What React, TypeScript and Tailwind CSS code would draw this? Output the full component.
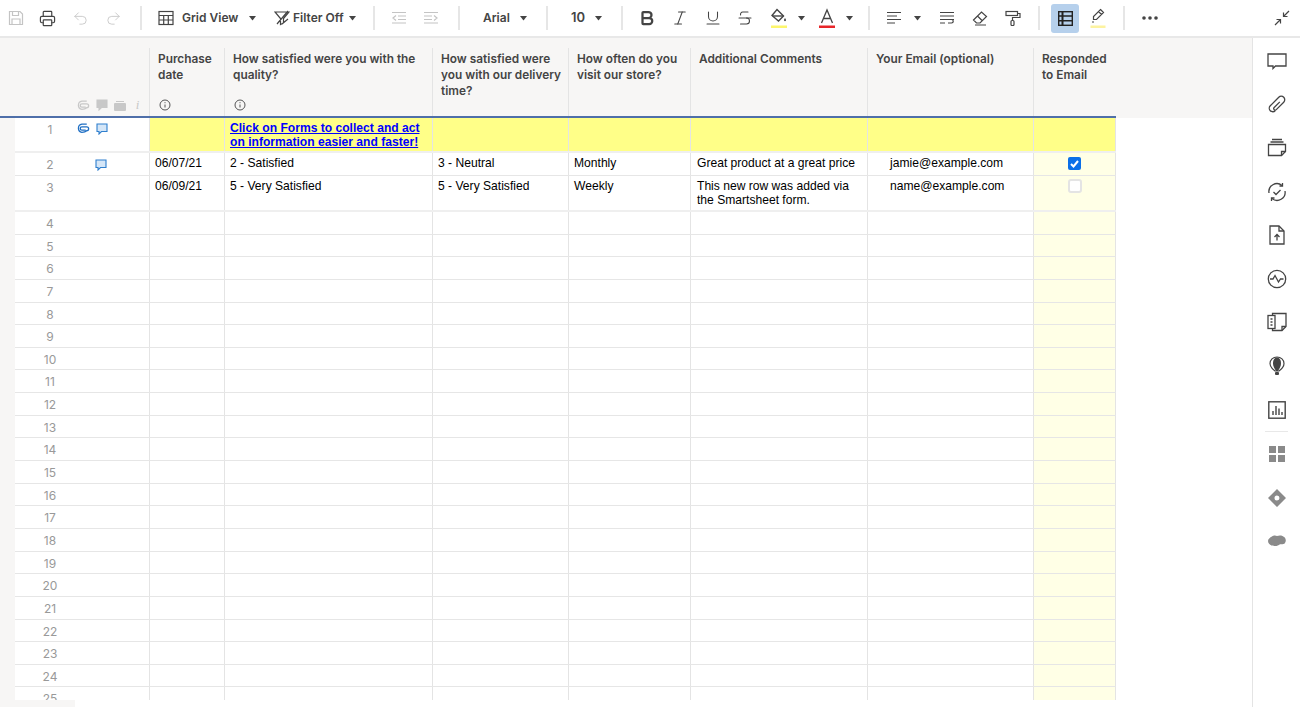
import React from 'react';
import { Printer, Undo2, Redo2, Bold, Italic, Underline, Strikethrough } from 'lucide-react';

const S = ({ children, size = 16, className = '' }: { children: React.ReactNode; size?: number; className?: string }) => (
  <svg width={size} height={size} viewBox="0 0 16 16" fill="none" stroke="currentColor" strokeWidth="1.2" className={`shrink-0 ${className}`}>
    {children}
  </svg>
);

const Caret = ({ className = '' }: { className?: string }) => (
  <span className={`w-[12px] shrink-0 flex justify-center ${className}`}>
    <svg width="7" height="5" viewBox="0 0 7 5" fill="#444"><path d="M0 0h7L3.500 4.500z" /></svg>
  </span>
);

const Sep = ({ className = '' }: { className?: string }) => <div className={`w-[2px] h-[24px] bg-[#e6e6e6] shrink-0 ${className}`} />;

const GridIcon = ({ className = '' }: { className?: string }) => (
  <S className={className} size={16}>
    <rect x="1" y="1.500" width="14" height="13" />
    <path d="M1 5.500h14M1 10h14M5.700 5.500v9M10.300 5.500v9" />
  </S>
);

const Toolbar = () => (
  <div className="h-[38px] shrink-0 flex items-center border-b-2 border-[#e8e8e8] text-[#444] text-[12px] font-semibold bg-white">
    <span className="w-[31px] flex justify-center text-[#c4c4c4]">
      <S><path d="M1.500 1.500h10.500l2.500 2.500v10.500h-13z" /><path d="M4.500 1.500v4h6v-4M4 14.500v-5.500h8v5.500" /></S>
    </span>
    <span className="w-[33px] flex justify-center"><Printer size={17} strokeWidth={1.7} /></span>
    <span className="w-[33px] flex justify-center text-[#c4c4c4]"><Undo2 size={17} strokeWidth={1.2} /></span>
    <span className="w-[32px] flex justify-center text-[#c4c4c4]"><Redo2 size={17} strokeWidth={1.2} /></span>
    <Sep className="ml-[11px]" />
    <GridIcon className="ml-[16px]" />
    <span className="ml-[8px] w-[64px]">Grid View</span>
    <Caret />
    <S className="ml-[16px]"><path d="M1 2h14L9.500 8.500V13l-3 1.500V8.500zM3 14L14 1M8 14l6-5" /></S>
    <span className="ml-[3px] w-[53px]">Filter Off</span>
    <Caret />
    <Sep className="ml-[15px]" />
    <S className="ml-[16px] text-[#c4c4c4]"><path d="M1 2.500h14M7 6h8M7 9.500h8M1 13h14M5 5.500L2 8l3 2.500" /></S>
    <S className="ml-[16px] text-[#c4c4c4]"><path d="M1 2.500h14M1 6h8M1 9.500h8M1 13h14M11 5.500L14 8l-3 2.500" /></S>
    <Sep className="ml-[19px]" />
    <span className="ml-[23px] w-[34px]">Arial</span>
    <Caret />
    <Sep className="ml-[17px]" />
    <span className="ml-[23px] w-[21px] text-[13px]">10</span>
    <Caret />
    <Sep className="ml-[17px]" />
    <span className="ml-[16px] w-[16px] flex justify-center"><Bold size={18} strokeWidth={3} className="shrink-0" /></span>
    <span className="ml-[17px] w-[16px] flex justify-center"><Italic size={18} strokeWidth={1.4} className="shrink-0" /></span>
    <span className="ml-[17px] w-[16px] flex justify-center"><Underline size={18} strokeWidth={1.4} className="shrink-0" /></span>
    <span className="ml-[16px] w-[16px] flex justify-center"><Strikethrough size={18} strokeWidth={1.4} className="shrink-0" /></span>
    <svg className="ml-[18px] shrink-0" width="16" height="21" viewBox="0 0 16 21" fill="none" stroke="#444" strokeWidth="1.4">
      <path d="M6 1.500l6.500 6.500-5 5L1 7.500z" /><path d="M1.500 8h11" /><path d="M14 10c1 1.500 1.200 2.200.8 2.800-.4.500-1.200.500-1.600 0-.4-.6-.2-1.300.8-2.800z" fill="#444" stroke="none" />
      <rect x="0" y="17.500" width="16" height="2.500" fill="#fdf66d" stroke="none" />
    </svg>
    <Caret className="ml-[8px]" />
    <svg className="ml-[12px] shrink-0" width="16" height="21" viewBox="0 0 16 21" fill="none" stroke="#444" strokeWidth="1.300">
      <path d="M2.500 15L8 2l5.500 13M4.500 10.500h7" />
      <rect x="0" y="17.500" width="16" height="2.500" fill="#e8262a" stroke="none" />
    </svg>
    <Caret className="ml-[8px]" />
    <Sep className="ml-[13px]" />
    <S className="ml-[16px]"><path d="M1 2.500h14M1 6h10M1 9.500h14M1 13h8" /></S>
    <Caret className="ml-[9px]" />
    <S className="ml-[16px]"><path d="M1 2.500h14M1 6h14M1 9.500h14M1 13h5M9 13h3.500a1.500 1.500 0 000-3.500H9" /></S>
    <S className="ml-[17px]"><path d="M1.500 10L9.500 2l5 4.500L8 13H4.500zM5.500 6L10.500 11M3 15h11" /></S>
    <S className="ml-[17px]"><rect x="1" y="1.500" width="11.500" height="4" /><path d="M12.500 3.500h2.500v4H7.500v3" /><rect x="6" y="10.500" width="3" height="5" rx="1" /></S>
    <Sep className="ml-[17px]" />
    <span className="ml-[11px] w-[28px] h-[29px] rounded-[3px] bg-[#b6d0ec] flex items-center justify-center shrink-0">
      <svg width="15" height="15" viewBox="0 0 15 15" fill="none" stroke="#222" strokeWidth="1.400">
        <rect x="0.700" y="0.700" width="13.600" height="13.600" />
        <path d="M4.500 0.700v13.600" strokeWidth="2" />
        <path d="M0.700 5h13.600M0.700 9.700h13.600" />
      </svg>
    </span>
    <svg className="ml-[11px] shrink-0" width="16" height="21" viewBox="0 0 16 21" fill="none" stroke="#444" strokeWidth="1.200">
      <path d="M10.500 1.500l3 3-7 7H3.500v-3zM8.500 3.500l3 3M2 14h2" />
      <rect x="0.500" y="17.500" width="15" height="2.500" fill="#fdf3a0" stroke="none" />
    </svg>
    <Sep className="ml-[17px]" />
    <svg className="ml-[17px] shrink-0" width="16" height="4" viewBox="0 0 16 4" fill="#444"><circle cx="2" cy="2" r="1.800" /><circle cx="8" cy="2" r="1.800" /><circle cx="14" cy="2" r="1.800" /></svg>
    <S className="ml-auto mr-[10px]" size={16}><path d="M15 1L9.500 6.500M9.500 2.500v4h4M1 15l5.500-5.500M2.500 9.500h4v4" /></S>
  </div>
);

const cols = [
  { w: 'w-[75px]', title: ['Purchase', 'date'], info: true },
  { w: 'w-[208px]', title: ['How satisfied were you with the', 'quality?'], info: true },
  { w: 'w-[136px]', title: ['How satisfied were', 'you with our delivery', 'time?'] },
  { w: 'w-[122px]', title: ['How often do you', 'visit our store?'] },
  { w: 'w-[177px]', title: ['Additional Comments'] },
  { w: 'w-[166px]', title: ['Your Email (optional)'] },
  { w: 'w-[82px]', title: ['Responded', 'to Email'] },
];

const Info = () => (
  <svg width="12" height="12" viewBox="0 0 12 12" fill="none" stroke="#555" strokeWidth="1">
    <circle cx="6" cy="6" r="5" /><path d="M6 5.500v3M6 3.200v1" />
  </svg>
);

const Clip = ({ color }: { color: string }) => (
  <svg width="13" height="11" viewBox="0 0 12 10" fill="none" stroke={color} strokeWidth="1.200">
    <path d="M8 6.500H4.500a1.500 1.500 0 010-3H9a1.500 1.500 0 010 3.500c-1 1-3 1.500-4.500 1.500A3.800 3.800 0 014.500 1H9" />
  </svg>
);

const Bubble = ({ fill, stroke }: { fill: string; stroke: string }) => (
  <svg width="12" height="12" viewBox="0 0 12 12" fill={fill} stroke={stroke} strokeWidth="1.100">
    <path d="M1 1h10v7.500H5.500L3 11V8.500H1z" />
  </svg>
);

const Header = () => (
  <div className="h-[80px] shrink-0 flex bg-[#f7f6f5]">
    <div className="w-[1116px] flex pt-[10px] border-b-2 border-[#4f6fa9]">
      <div className="w-[135px] ml-[15px] flex items-end justify-end pb-[5px] pr-[6px] gap-[6px] text-[#c8c8c8] border-r border-[#e4e4e4]">
        <Clip color="#c8c8c8" />
        <Bubble fill="#c8c8c8" stroke="#c8c8c8" />
        <svg width="12" height="10" viewBox="0 0 12 10" fill="#c8c8c8"><rect x="0" y="2" width="12" height="8" rx="1" /><rect x="2" y="0" width="8" height="1" /></svg>
        <span className="w-[11px] text-center font-['Liberation_Serif',serif] italic text-[13px] leading-[12px]">i</span>
      </div>
      {cols.map((c, i) => (
        <div key={i} className={`${c.w} shrink-0 flex flex-col justify-between pl-[8px] pt-[3px] pb-[5px] text-[11.85px] leading-[16px] font-semibold text-[#444] ${i < 6 ? 'border-r border-[#e4e4e4]' : ''}`}>
          <div>{c.title.map((t) => <div key={t} className="whitespace-nowrap">{t}</div>)}</div>
          {c.info && <div className="pl-[1px] h-[12px]"><Info /></div>}
        </div>
      ))}
    </div>
  </div>
);

const cellCls = ['w-[75px] pl-[5px]', 'w-[208px] pl-[5px]', 'w-[136px] pl-[5px]', 'w-[122px] pl-[5px]', 'w-[177px] pl-[6px]', 'w-[166px] pl-[22px]', 'w-[82px]'];

const Row = ({ n, h, cells, yellow, icons, check, thick }: { n: number; h: string; cells?: React.ReactNode[]; yellow?: boolean; icons?: React.ReactNode; check?: boolean | 'off'; thick?: boolean }) => (
  <div className={`${h} shrink-0 flex ${thick ? 'border-b-2 border-[#efefef]' : 'border-b border-[#e6e6e6]'}`}>
    <div className="w-[135px] shrink-0 flex border-r border-[#e4e4e4] bg-white pt-[4px]">
      <span className="w-[70px] text-center text-[12px] leading-[16px] text-[#999]">{n}</span>
      {icons}
    </div>
    {cellCls.map((c, i) => (
      <div
        key={i}
        className={`${c} shrink-0 border-r border-[#e4e4e4] text-[12.1px] leading-[14px] text-black font-['Liberation_Sans',Arial,sans-serif] pt-[3px] ${yellow ? 'bg-[#ffff88]' : i === 6 ? 'bg-[#ffffe6]' : ''}`}
      >
        {cells?.[i]}
        {i === 6 && check === true && (
          <div className="flex justify-center pt-[1px]">
            <span className="w-[13px] h-[13px] rounded-[2px] bg-[#0b6fe8] flex items-center justify-center">
              <svg width="9" height="8" viewBox="0 0 9 8" fill="none" stroke="#fff" strokeWidth="2"><path d="M1 4l2.500 2.500L8 1" /></svg>
            </span>
          </div>
        )}
        {i === 6 && check === 'off' && (
          <div className="flex justify-center">
            <span className="w-[14px] h-[14px] rounded-[3px] bg-white border-2 border-[#e4e4e4]" />
          </div>
        )}
      </div>
    ))}
  </div>
);

const SideSlot = ({ children, muted }: { children: React.ReactNode; muted?: boolean }) => (
  <div className={`h-[43.6px] shrink-0 flex items-center justify-center ${muted ? 'text-[#8a8a8a]' : 'text-[#444]'}`}>{children}</div>
);

const Sidebar = () => (
  <div className="w-[48px] shrink-0 border-l border-[#e4e4e4] bg-white pt-[1px] flex flex-col items-stretch">
    <SideSlot><svg width="20" height="18" viewBox="0 0 20 18" fill="none" stroke="currentColor" strokeWidth="1.300"><path d="M1 2h18v12H8.500L6 16.500V14H1z" /></svg></SideSlot>
    <SideSlot>
      <svg width="20" height="20" viewBox="0 0 20 20" fill="none" stroke="currentColor" strokeWidth="1.300">
        <g transform="rotate(45 10 10)">
          <path d="M9 6v8a1.500 1.500 0 003 0V3.500a3.500 3.500 0 00-7 0v12a3.500 3.500 0 007 0" transform="translate(1.500 0.500)" />
        </g>
      </svg>
    </SideSlot>
    <SideSlot>
      <svg width="20" height="20" viewBox="0 0 20 20" fill="none" stroke="currentColor" strokeWidth="1.300">
        <path d="M5 1.500h10M3.500 4h13" /><path d="M1.500 6.500h17v7l-4 4H1.500z" /><path d="M18.500 13.500h-4v4" />
      </svg>
    </SideSlot>
    <SideSlot>
      <svg width="20" height="20" viewBox="0 0 20 20" fill="none" stroke="currentColor" strokeWidth="1.300">
        <path d="M2 11A8 8 0 0115 3.500M18 9A8 8 0 015 16.500" /><path d="M15.500 1v3h-3M4.500 19v-3h3" /><path d="M6.500 10l2.500 2.500 4.500-4.500" />
      </svg>
    </SideSlot>
    <SideSlot>
      <svg width="16" height="20" viewBox="0 0 16 20" fill="none" stroke="currentColor" strokeWidth="1.300">
        <path d="M1 1h9l5 5v13H1z" /><path d="M10 1v5h5" /><path d="M8 15.500V10M5.500 12L8 9.500l2.500 2.500" />
      </svg>
    </SideSlot>
    <SideSlot>
      <svg width="20" height="20" viewBox="0 0 20 20" fill="none" stroke="currentColor" strokeWidth="1.300">
        <circle cx="10" cy="10" r="8.700" /><path d="M3 10h3l2-3.500 3.500 6.500 2-3h3" />
      </svg>
    </SideSlot>
    <SideSlot>
      <svg width="20" height="20" viewBox="0 0 20 20" fill="none" stroke="currentColor" strokeWidth="1.300">
        <path d="M5.500 3.500V1.500h13.500v13l-4 4H5.500v-2" /><rect x="1" y="3.500" width="7" height="13" /><path d="M3.500 7h2M3.500 10h2M3.500 13h2M19 14.500h-4v4" />
      </svg>
    </SideSlot>
    <SideSlot>
      <svg width="16" height="20" viewBox="0 0 16 20" fill="none" stroke="currentColor">
        <path d="M8 1C12 1 15 4 15 7.500c0 3-3 6-5 7.500H6C4 13.500 1 10.500 1 7.500 1 4 4 1 8 1z" fill="none" strokeWidth="1.200" />
        <path d="M8 1.500c2.500 0 4 2.500 4 6 0 3-2 6-3 7.500H7C6 13.500 4 10.500 4 7.500c0-3.500 1.500-6 4-6z" fill="currentColor" stroke="none" />
        <rect x="6" y="16" width="4" height="3" rx="1" fill="currentColor" stroke="none" />
      </svg>
    </SideSlot>
    <SideSlot>
      <svg width="18" height="18" viewBox="0 0 18 18" fill="none" stroke="currentColor" strokeWidth="1.400">
        <rect x="0.800" y="0.800" width="16.400" height="16.400" /><path d="M5 14v-4M8 14V5M11 14V7.500M14 14v-3" />
      </svg>
    </SideSlot>
    <div className="h-0 border-t border-[#e8e8e8] mx-[12px]" />
    <SideSlot muted>
      <svg width="16" height="16" viewBox="0 0 16 16" fill="currentColor"><rect width="7" height="7" /><rect x="9" width="7" height="7" /><rect y="9" width="7" height="7" /><rect x="9" y="9" width="7" height="7" /></svg>
    </SideSlot>
    <SideSlot muted>
      <svg width="18" height="18" viewBox="0 0 18 18" fill="currentColor"><path fillRule="evenodd" d="M9 0l9 9-9 9-9-9zM9 6.500a2.500 2.500 0 100 5 2.500 2.500 0 000-5z" /></svg>
    </SideSlot>
    <SideSlot muted>
      <svg width="18" height="12" viewBox="0 0 18 12" fill="currentColor"><path d="M4 1.500C5.500 0 8 .3 9 1c2-1 6-.8 7 1 2 1 2.300 4.500 1 6-1 1.500-4 1.500-5 1.200C10 11 7 11.500 5 10.500 3 10.800 0 9 0 6c0-2 2-3.500 4-4.500z" /></svg>
    </SideSlot>
  </div>
);

const SheetLink = ({ children }: { children: React.ReactNode }) => (
  <div className="text-[#0000ff] font-bold underline whitespace-nowrap">{children}</div>
);

const App = () => {
  const blank = Array.from({ length: 22 }, (_, i) => i + 4);
  return (
    <div className="w-[1300px] h-[707px] overflow-hidden flex flex-col bg-white font-['Inter',sans-serif]">
      <Toolbar />
      <div className="flex flex-1 min-h-0">
        <div className="flex-1 min-w-0 flex flex-col">
          <Header />
          <div className="flex flex-1 min-h-0">
            <div className="w-[15px] shrink-0 bg-[#f7f6f5]" />
            <div className="flex-1 min-w-0 flex flex-col">
              <div className="w-[1101px] h-[582px] shrink-0 overflow-hidden flex flex-col">
                <Row
                  n={1}
                  h="h-[35px]"
                  yellow
                  thick
                  icons={<span className="flex gap-[6px] pt-[1px] items-start ml-[-8px]"><Clip color="#1f6fc4" /><Bubble fill="#d5e6f7" stroke="#2f7fce" /></span>}
                  cells={[null, <><SheetLink>Click on Forms to collect and act</SheetLink><SheetLink>on information easier and faster!</SheetLink></>]}
                />
                <Row
                  n={2}
                  h="h-[23px]"
                  check
                  icons={<span className="ml-[10px] pt-[2px]"><Bubble fill="#d5e6f7" stroke="#2f7fce" /></span>}
                  cells={['06/07/21', '2 - Satisfied', '3 - Neutral', 'Monthly', 'Great product at a great price', 'jamie@example.com']}
                />
                <Row
                  n={3}
                  h="h-[36px]"
                  check="off"
                  thick
                  cells={['06/09/21', '5 - Very Satisfied', '5 - Very Satisfied', 'Weekly', <>This new row was added via<br />the Smartsheet form.</>, 'name@example.com']}
                />
                {blank.map((n) => (
                  <Row key={n} n={n} h="h-[22.65px]" />
                ))}
              </div>
              <div className="flex-1 w-[60px] bg-[#f7f6f5]" />
            </div>
          </div>
        </div>
        <Sidebar />
      </div>
    </div>
  );
};

export default App;
